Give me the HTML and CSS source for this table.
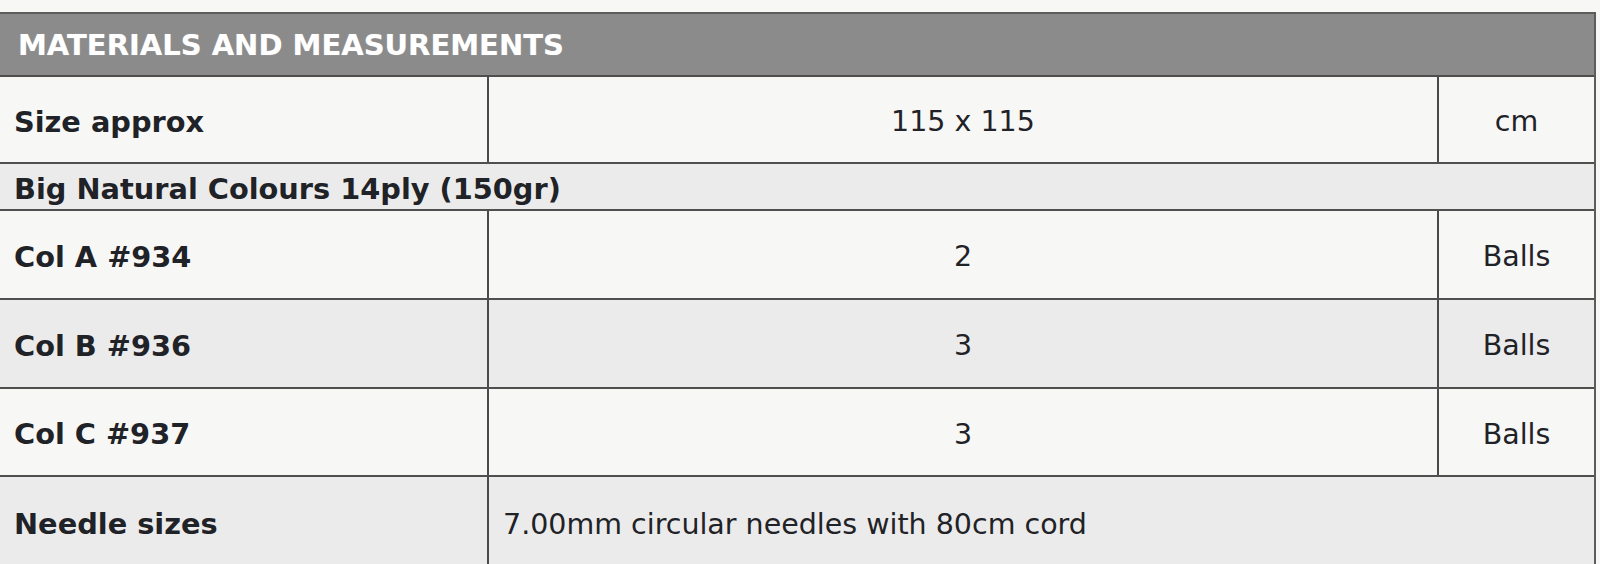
FILE: index.html
```html
<!DOCTYPE html>
<html lang="en">
<head>
<meta charset="utf-8">
<title>Materials and Measurements</title>
<link rel="stylesheet" href="styles.css">
</head>
<body>
<div class="sheet">
  <div class="head">MATERIALS AND MEASUREMENTS</div>
  <div class="row r-size light">
    <div class="cell label">Size approx</div>
    <div class="cell value">115 x 115</div>
    <div class="cell unit">cm</div>
  </div>
  <div class="row r-yarn shade">
    <div class="cell label span-all">Big Natural Colours 14ply (150gr)</div>
  </div>
  <div class="row r-89 light">
    <div class="cell label">Col A #934</div>
    <div class="cell value">2</div>
    <div class="cell unit">Balls</div>
  </div>
  <div class="row r-89 shade">
    <div class="cell label">Col B #936</div>
    <div class="cell value">3</div>
    <div class="cell unit">Balls</div>
  </div>
  <div class="row r-88 light">
    <div class="cell label">Col C #937</div>
    <div class="cell value">3</div>
    <div class="cell unit">Balls</div>
  </div>
  <div class="row r-last shade">
    <div class="cell label">Needle sizes</div>
    <div class="cell note">7.00mm circular needles with 80cm cord</div>
  </div>
</div>
</body>
</html>
```
FILE: styles.css
```css
html, body {
  margin: 0;
  padding: 0;
  background: #f7f7f5;
  height: 564px;
  overflow: hidden;
}

body {
  font-family: "DejaVu Sans", Verdana, sans-serif;
  color: #1f2226;
}

.sheet {
  margin-top: 12px;
  margin-left: -2px;
  width: 1598px;
  border: 2px solid #5c5c5c;
  border-bottom: none;
  box-sizing: border-box;
}

.head {
  height: 61px;
  background: #8b8b8b;
  border-bottom: 2px solid #4e4e4e;
  color: #ffffff;
  font-weight: bold;
  font-size: 29px;
  display: flex;
  align-items: center;
  padding-left: 18px;
  text-shadow: 0 0 1px rgba(255,255,255,0.4);
}

.row {
  display: grid;
  grid-template-columns: 489px 950px 1fr;
  border-bottom: 2px solid #4f4f4f;
  box-sizing: border-box;
}

.r-size { height: 87px; }
.r-yarn { height: 47px; }
.r-89 { height: 89px; }
.r-88 { height: 88px; }
.r-last { height: 90px; border-bottom: none; }

.light { background: #f7f7f6; }
.shade { background: #ebebeb; }

.cell {
  display: flex;
  align-items: center;
  font-size: 28.5px;
  min-width: 0;
  white-space: nowrap;
  padding-top: 4px;
  box-sizing: border-box;
}

.label {
  font-weight: bold;
  font-size: 28.8px;
  padding-left: 14px;
  border-right: 2px solid #4a4a4a;
}

.span-all {
  grid-column: 1 / -1;
  border-right: none;
}

.value {
  justify-content: center;
  border-right: 2px solid #4a4a4a;
}

.unit {
  justify-content: center;
}

.note {
  grid-column: 2 / -1;
  padding-left: 14px;
}
```
